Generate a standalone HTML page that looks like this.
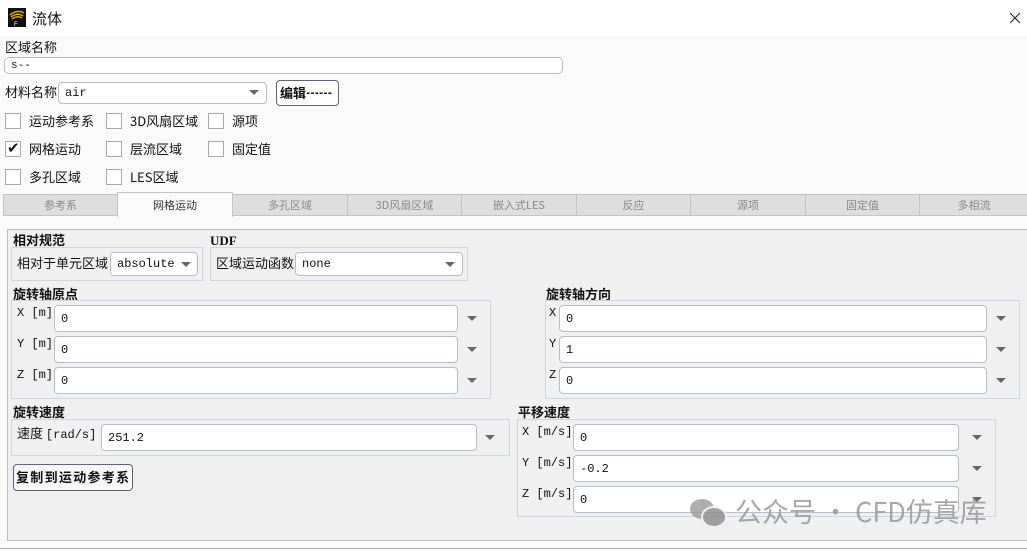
<!DOCTYPE html>
<html><head><meta charset="utf-8"><style>
*{box-sizing:border-box;margin:0;padding:0}
body{width:1027px;height:552px;background:#fafafa;position:relative;overflow:hidden;font-family:"Liberation Mono","Noto Sans CJK SC",monospace;font-size:12px;color:#111}
.a{position:absolute;white-space:nowrap}
.cn{font-family:"Noto Sans CJK SC",sans-serif;font-size:13px;line-height:16px}
.b{font-weight:bold}
.in{position:absolute;background:#fff;border:1px solid #b8bcc6;border-radius:4px;font-size:12px;padding-left:6px;display:flex;align-items:center}
.cb{position:absolute;width:16px;height:16px;background:#fff;border:1px solid #a9a9a9}
.grp{position:absolute;border:1px solid #cfd5e0}
.tri{position:absolute;width:0;height:0;border-left:5px solid transparent;border-right:5px solid transparent;border-top:5px solid #666}
.tab{position:absolute;top:194px;height:22px;background:#dedede;border:1px solid #c4c4c4;color:#888;font-family:"Noto Sans CJK SC",sans-serif;font-size:11px;text-align:center;line-height:21px}
</style></head><body>
<div class="a" style="left:0;top:0;width:1027px;height:36px;background:#fff"></div>
<svg class="a" style="left:8px;top:8px" width="18" height="19" viewBox="0 0 18 19"><rect width="18" height="19" fill="#111"/><path d="M2 7 Q9 1 16 5 M3 9 Q10 4 15 8 M4 11 Q10 7 14 10" stroke="#d9a21b" stroke-width="1.5" fill="none"/><text x="6" y="18" font-size="6" fill="#fff" font-family="Liberation Sans">F</text></svg>
<div class="a cn" style="left:32px;top:10px;font-size:15px;line-height:18px">流体</div>
<svg class="a" style="left:1009px;top:12px" width="12" height="12"><path d="M1 1L11 11M11 1L1 11" stroke="#333" stroke-width="1.2"/></svg>

<div class="a cn" style="left:5px;top:39px">区域名称</div>
<div class="in" style="left:4px;top:57px;width:559px;height:17px;border-radius:5px;font-size:11px">s--</div>
<div class="a cn" style="left:5px;top:84px">材料名称</div>
<div class="in" style="left:58px;top:82px;width:209px;height:22px">air</div>
<div class="tri" style="left:249px;top:90px"></div>
<div class="a cn b" style="left:276px;top:80px;width:63px;height:26px;border:1.5px solid #5b6478;border-radius:4px;padding:4px 0 0 3px;background:#fff">编辑┅┅</div>

<div class="cb" style="left:5px;top:113px"></div><div class="a cn" style="left:29px;top:113px">运动参考系</div>
<div class="cb" style="left:106px;top:113px"></div><div class="a cn" style="left:130px;top:113px">3D风扇区域</div>
<div class="cb" style="left:208px;top:113px"></div><div class="a cn" style="left:232px;top:113px">源项</div>
<div class="cb" style="left:5px;top:141px"></div><div class="a" style="left:7px;top:139px;font-size:15px;font-weight:bold;font-family:'DejaVu Sans'">✔</div><div class="a cn" style="left:29px;top:141px">网格运动</div>
<div class="cb" style="left:106px;top:141px"></div><div class="a cn" style="left:130px;top:141px">层流区域</div>
<div class="cb" style="left:208px;top:141px"></div><div class="a cn" style="left:232px;top:141px">固定值</div>
<div class="cb" style="left:5px;top:169px"></div><div class="a cn" style="left:29px;top:169px">多孔区域</div>
<div class="cb" style="left:106px;top:169px"></div><div class="a cn" style="left:130px;top:169px">LES区域</div>

<div class="tab" style="left:3px;width:115px">参考系</div>
<div class="tab" style="left:117px;top:192px;height:25px;width:116px;background:#fafafa;color:#333;border-bottom:none;line-height:25px">网格运动</div>
<div class="tab" style="left:232px;width:116px">多孔区域</div>
<div class="tab" style="left:347px;width:115px">3D风扇区域</div>
<div class="tab" style="left:461px;width:116px">嵌入式LES</div>
<div class="tab" style="left:576px;width:115px">反应</div>
<div class="tab" style="left:690px;width:116px">源项</div>
<div class="tab" style="left:805px;width:115px">固定值</div>
<div class="tab" style="left:919px;width:110px">多相流</div>

<div class="a" style="left:7px;top:229px;width:1022px;height:312px;background:#f0f0f0;border:1px solid #bdbdbd;border-right:none"></div>
<div class="a" style="left:0;top:548px;width:1027px;height:1px;background:#aaa"></div>
<div class="a" style="left:0;top:549px;width:1027px;height:3px;background:#fff"></div>

<div class="a cn b" style="left:13px;top:232px">相对规范</div>
<div class="grp" style="left:11px;top:247px;width:192px;height:34px"></div>
<div class="a cn" style="left:17px;top:255px">相对于单元区域</div>
<div class="in" style="left:110px;top:252px;width:88px;height:24px">absolute</div>
<div class="tri" style="left:181px;top:262px"></div>

<div class="a b" style="left:210px;top:233px;font-family:'Liberation Serif';font-size:13px">UDF</div>
<div class="grp" style="left:210px;top:247px;width:258px;height:34px"></div>
<div class="a cn" style="left:216px;top:255px">区域运动函数</div>
<div class="in" style="left:295px;top:252px;width:168px;height:24px">none</div>
<div class="tri" style="left:445px;top:262px"></div>

<div class="a cn b" style="left:13px;top:286px">旋转轴原点</div>
<div class="grp" style="left:11px;top:300px;width:480px;height:99px"></div>
<div class="a" style="left:17px;top:306px">X [m]</div><div class="in" style="left:54px;top:305px;width:404px;height:27px">0</div><div class="tri" style="left:467px;top:316px"></div>
<div class="a" style="left:17px;top:337px">Y [m]</div><div class="in" style="left:54px;top:336px;width:404px;height:27px">0</div><div class="tri" style="left:467px;top:347px"></div>
<div class="a" style="left:17px;top:368px">Z [m]</div><div class="in" style="left:54px;top:367px;width:404px;height:27px">0</div><div class="tri" style="left:467px;top:378px"></div>

<div class="a cn b" style="left:546px;top:286px">旋转轴方向</div>
<div class="grp" style="left:545px;top:300px;width:475px;height:99px"></div>
<div class="a" style="left:549px;top:306px">X</div><div class="in" style="left:559px;top:305px;width:428px;height:27px">0</div><div class="tri" style="left:996px;top:316px"></div>
<div class="a" style="left:549px;top:337px">Y</div><div class="in" style="left:559px;top:336px;width:428px;height:27px">1</div><div class="tri" style="left:996px;top:347px"></div>
<div class="a" style="left:549px;top:368px">Z</div><div class="in" style="left:559px;top:367px;width:428px;height:27px">0</div><div class="tri" style="left:996px;top:378px"></div>

<div class="a cn b" style="left:13px;top:404px">旋转速度</div>
<div class="grp" style="left:11px;top:419px;width:499px;height:37px"></div>
<div class="a cn" style="left:17px;top:425px">速度 <span style="font-family:'Liberation Mono';font-size:12px">[rad/s]</span></div>
<div class="in" style="left:101px;top:424px;width:376px;height:27px">251.2</div><div class="tri" style="left:485px;top:435px"></div>

<div class="a cn b" style="left:13px;top:464px;width:120px;height:27px;border:1px solid #5b6478;border-radius:4px;padding:4px 2px;background:#f8f8f8;letter-spacing:1.3px">复制到运动参考系</div>

<div class="a cn b" style="left:518px;top:404px">平移速度</div>
<div class="grp" style="left:517px;top:419px;width:479px;height:98px"></div>
<div class="a" style="left:522px;top:425px">X [m/s]</div><div class="in" style="left:573px;top:424px;width:386px;height:27px">0</div><div class="tri" style="left:972px;top:435px"></div>
<div class="a" style="left:522px;top:456px">Y [m/s]</div><div class="in" style="left:573px;top:455px;width:386px;height:27px">-0.2</div><div class="tri" style="left:972px;top:466px"></div>
<div class="a" style="left:522px;top:487px">Z [m/s]</div><div class="in" style="left:573px;top:486px;width:386px;height:27px">0</div><div class="tri" style="left:972px;top:497px"></div>

<svg class="a" style="left:688px;top:496px;opacity:.8" width="42" height="34"><ellipse cx="14" cy="13" rx="12" ry="10" fill="#9a9a9a"/><ellipse cx="26" cy="21" rx="12" ry="10" fill="#8a8a8a" stroke="#f0f0f0" stroke-width="2"/></svg>
<div class="a" style="left:735px;top:494px;font-family:'Noto Sans CJK SC',sans-serif;font-size:27px;line-height:34px;color:#999;opacity:.85">公众号 · CFD仿真库</div>
</body></html>
